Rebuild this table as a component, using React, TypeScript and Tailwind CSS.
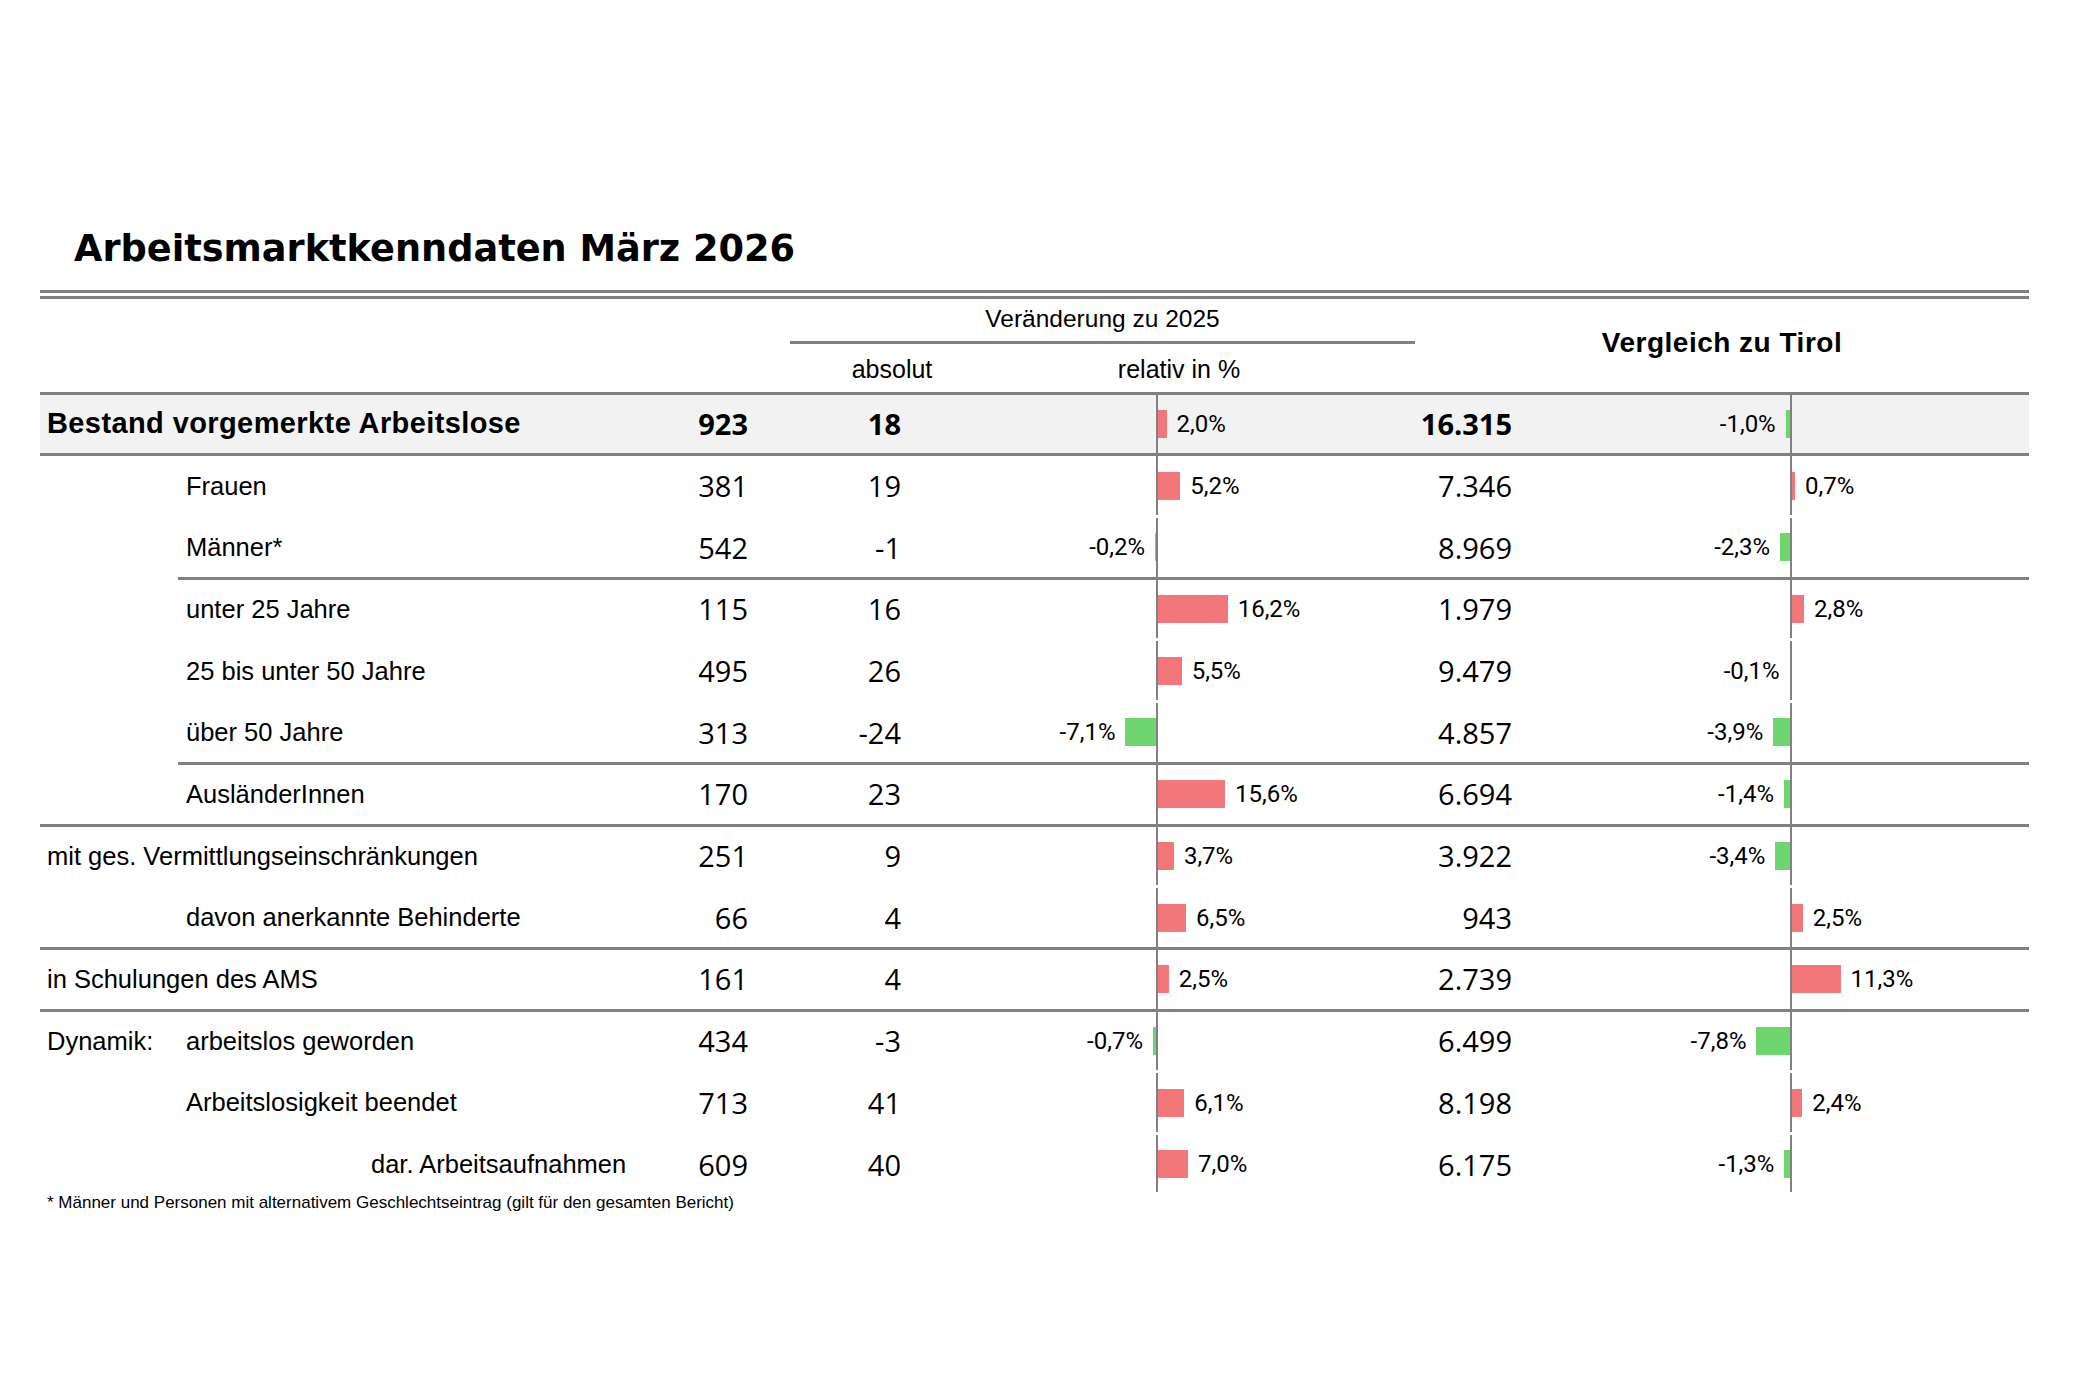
type Line = "full" | "indent" | "none";

type Row = {
  label: string;
  prefix?: string;
  indent: "none" | "sub" | "deep";
  line: Line;
  value: string;
  abs: string;
  rel: number;
  tirol: string;
  tirolRel: number;
  bold?: boolean;
  last?: boolean;
};

const rows: Row[] = [
  { label: "Bestand vorgemerkte Arbeitslose", indent: "none", line: "full", value: "923", abs: "18", rel: 2.0, tirol: "16.315", tirolRel: -1.0, bold: true },
  { label: "Frauen", indent: "sub", line: "full", value: "381", abs: "19", rel: 5.2, tirol: "7.346", tirolRel: 0.7 },
  { label: "Männer*", indent: "sub", line: "none", value: "542", abs: "-1", rel: -0.2, tirol: "8.969", tirolRel: -2.3 },
  { label: "unter 25 Jahre", indent: "sub", line: "indent", value: "115", abs: "16", rel: 16.2, tirol: "1.979", tirolRel: 2.8 },
  { label: "25 bis unter 50 Jahre", indent: "sub", line: "none", value: "495", abs: "26", rel: 5.5, tirol: "9.479", tirolRel: -0.1 },
  { label: "über 50 Jahre", indent: "sub", line: "none", value: "313", abs: "-24", rel: -7.1, tirol: "4.857", tirolRel: -3.9 },
  { label: "AusländerInnen", indent: "sub", line: "indent", value: "170", abs: "23", rel: 15.6, tirol: "6.694", tirolRel: -1.4 },
  { label: "mit ges. Vermittlungseinschränkungen", indent: "none", line: "full", value: "251", abs: "9", rel: 3.7, tirol: "3.922", tirolRel: -3.4 },
  { label: "davon anerkannte Behinderte", indent: "sub", line: "none", value: "66", abs: "4", rel: 6.5, tirol: "943", tirolRel: 2.5 },
  { label: "in Schulungen des AMS", indent: "none", line: "full", value: "161", abs: "4", rel: 2.5, tirol: "2.739", tirolRel: 11.3 },
  { label: "arbeitslos geworden", prefix: "Dynamik:", indent: "none", line: "full", value: "434", abs: "-3", rel: -0.7, tirol: "6.499", tirolRel: -7.8 },
  { label: "Arbeitslosigkeit beendet", indent: "sub", line: "none", value: "713", abs: "41", rel: 6.1, tirol: "8.198", tirolRel: 2.4 },
  { label: "dar. Arbeitsaufnahmen", indent: "deep", line: "none", value: "609", abs: "40", rel: 7.0, tirol: "6.175", tirolRel: -1.3, last: true },
];

const COLS = "grid-cols-[520px_188px_153px_255px_204px_152px_278px_239px]";
const COLS_INDENT = "grid-cols-[382px_188px_153px_255px_204px_152px_278px_239px]";

const LABEL_FONT = "font-['Liberation_Sans',Arial,sans-serif]";
const NUM_FONT = "font-['Open_Sans',sans-serif]";
const PCT_FONT = "font-['Roboto',sans-serif]";

// bar length per percent point, same scale for both charts
const PX_PER_PCT = 4.3;

function pct(v: number) {
  return `${v.toFixed(1).replace(".", ",")}%`;
}

function Bar({ value }: { value: number }) {
  return (
    <div
      className={`h-[28px] shrink-0 ${value < 0 ? "bg-[#6fd66f]" : "bg-[#f2777b]"}`}
      style={{ width: Math.abs(value) * PX_PER_PCT }}
    />
  );
}

function NegativeSide({ value, pad }: { value: number; pad: string }) {
  return (
    <div className={`flex items-center justify-end gap-[10px] ${pad}`}>
      {value < 0 && (
        <>
          <span className={`${PCT_FONT} text-[24px] leading-none`}>{pct(value)}</span>
          <Bar value={value} />
        </>
      )}
    </div>
  );
}

function PositiveSide({ value, pad }: { value: number; pad: string }) {
  return (
    <div className={`flex items-center gap-[10px] border-l-2 border-[#808080] ${pad}`}>
      {value >= 0 && (
        <>
          <Bar value={value} />
          <span className={`${PCT_FONT} text-[24px] leading-none`}>{pct(value)}</span>
        </>
      )}
    </div>
  );
}

function TableRow({ row }: { row: Row }) {
  // rows without a rule keep a transparent one so every row centres the same way
  const border = row.line !== "none" ? "border-t-[3px] border-[#808080]" : "border-t-[3px] border-transparent";
  const height = row.last ? "h-[60px]" : "h-[61.7px]";
  const pad = row.last ? "pt-[2px]" : "";
  const weight = row.bold ? "font-bold" : "font-normal";
  const num = `flex items-center justify-end ${NUM_FONT} text-[29px] ${weight} ${pad}`;

  let labelPad = "pl-[7px]";
  if (row.line === "indent") labelPad = "pl-[8px]";
  else if (row.indent === "sub") labelPad = "pl-[146px]";
  else if (row.indent === "deep") labelPad = "pl-[331px]";

  const grid = (
    <div className={`grid ${row.line === "indent" ? COLS_INDENT : COLS} ${height} ${border} ${row.bold ? "bg-[#f2f2f2]" : ""}`}>
      <div
        className={`flex items-center whitespace-nowrap ${LABEL_FONT} ${labelPad} ${pad} ${
          row.bold ? "text-[29px] font-bold tracking-[0.4px]" : "text-[25.5px]"
        }`}
      >
        {row.prefix && <span className="w-[139px] shrink-0">{row.prefix}</span>}
        <span>{row.label}</span>
      </div>
      <div className={num}>{row.value}</div>
      <div className={num}>{row.abs}</div>
      <NegativeSide value={row.rel} pad={pad} />
      <PositiveSide value={row.rel} pad={pad} />
      <div className={num}>{row.tirol}</div>
      <NegativeSide value={row.tirolRel} pad={pad} />
      <PositiveSide value={row.tirolRel} pad={pad} />
    </div>
  );

  return row.line === "indent" ? <div className="pl-[138px]">{grid}</div> : grid;
}

function TableHeader() {
  return (
    <div className={`grid h-[93px] grid-cols-[750px_625px_614px] ${LABEL_FONT}`}>
      <div />
      <div className="flex flex-col">
        <div className="flex h-[45px] items-center justify-center border-b-[3px] border-[#808080] text-[24.5px]">
          Veränderung zu 2025
        </div>
        <div className="grid flex-1 grid-cols-[204px_370px] pt-[4px] text-[25px]">
          <div className="flex items-center justify-center">absolut</div>
          <div className="flex items-center justify-center">relativ in %</div>
        </div>
      </div>
      <div className="flex items-center justify-center pb-[5px] text-[28px] font-bold tracking-[0.5px]">
        Vergleich zu Tirol
      </div>
    </div>
  );
}

export default function App() {
  return (
    <main className="h-[1400px] w-[2100px] bg-white pt-[231px] pl-[40px] text-black">
      <h1 className="pl-[34px] font-['DejaVu_Sans',sans-serif] text-[36.7px] leading-none font-bold">
        Arbeitsmarktkenndaten März 2026
      </h1>

      <div className="mt-[22px] w-[1989px]">
        <div className="h-[9px] border-y-[3px] border-[#808080]" />
        <TableHeader />
        {rows.map((row) => (
          <TableRow key={row.label} row={row} />
        ))}
        <p className={`mt-[2px] pl-[7px] ${LABEL_FONT} text-[17px] leading-none`}>
          * Männer und Personen mit alternativem Geschlechtseintrag (gilt für den gesamten Bericht)
        </p>
      </div>
    </main>
  );
}
